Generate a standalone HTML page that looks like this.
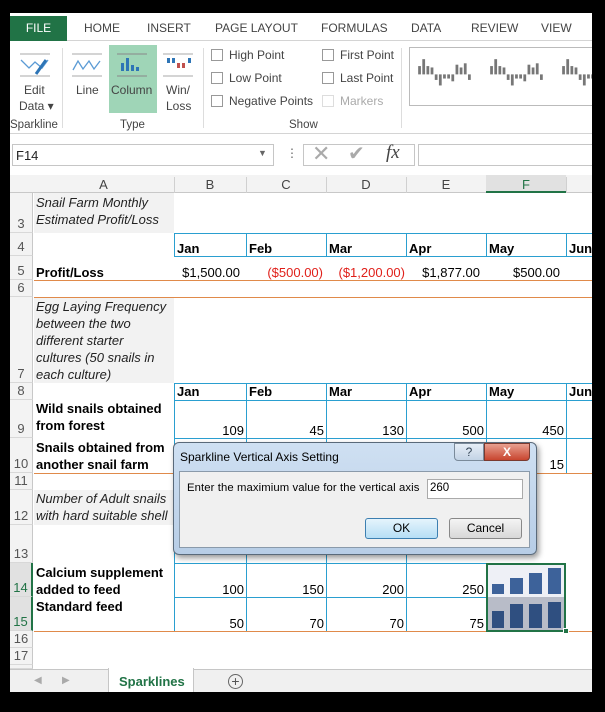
<!DOCTYPE html>
<html><head><meta charset="utf-8"><style>
*{margin:0;padding:0;box-sizing:border-box}
body{width:605px;height:712px;background:#000;position:relative;overflow:hidden;font-family:"Liberation Sans",sans-serif;}
.a{position:absolute}
.t{font-size:12px;color:#444;position:absolute;white-space:nowrap}
.cb{position:absolute;width:12px;height:12px;border:1px solid #999;background:#fff}
.rh{position:absolute;left:10px;width:23px;background:#f3f3f3;color:#555;font-size:13px;text-align:center;border-bottom:1px solid #d8d8d8;border-right:1px solid #c8c8c8;display:flex;align-items:flex-end;justify-content:center;padding-bottom:1px}
.c{position:absolute;font-size:13px;color:#000;white-space:nowrap;line-height:17px}
.b{font-weight:bold}
.i{font-style:italic;color:#222}
.r{text-align:right}
.hl{position:absolute;height:1px}
.vl{position:absolute;width:1px;background:#2a9fd0}
</style></head><body>
<div class="a" style="left:10px;top:13px;width:582px;height:679px;background:#fff"></div>
<div class="a" style="left:10px;top:13px;width:582px;height:28px;background:#fff;border-bottom:1px solid #d4d4d4"></div>
<div class="a" style="left:10px;top:16px;width:57px;height:25px;background:#217346;color:#fff;font-size:12px;text-align:center;line-height:25px">FILE</div>
<div class="t" style="left:84px;top:21px;font-size:12px">HOME</div>
<div class="t" style="left:147px;top:21px">INSERT</div>
<div class="t" style="left:215px;top:21px">PAGE LAYOUT</div>
<div class="t" style="left:321px;top:21px">FORMULAS</div>
<div class="t" style="left:411px;top:21px">DATA</div>
<div class="t" style="left:471px;top:21px">REVIEW</div>
<div class="t" style="left:541px;top:21px">VIEW</div>
<div class="a" style="left:10px;top:42px;width:582px;height:92px;background:#fff;border-bottom:1px solid #d4d4d4"></div>
<svg class="a" style="left:18px;top:50px" width="34" height="30"><line x1="2" y1="4" x2="32" y2="4" stroke="#aaa"/><line x1="2" y1="26" x2="32" y2="26" stroke="#aaa"/><polyline points="3,10 11,18 17,12 24,18 30,10" fill="none" stroke="#5b9bd5" stroke-width="1.3"/><line x1="28" y1="10" x2="18" y2="24" stroke="#2e75b6" stroke-width="3"/></svg>
<div class="t" style="left:24px;top:83px">Edit</div>
<div class="t" style="left:19px;top:99px">Data ▾</div>
<div class="t" style="left:10px;top:119px;font-size:11.5px">Sparkline</div>
<div class="a" style="left:62px;top:48px;width:1px;height:80px;background:#ddd"></div>
<svg class="a" style="left:70px;top:50px" width="34" height="30"><line x1="2" y1="4" x2="32" y2="4" stroke="#aaa"/><line x1="2" y1="26" x2="32" y2="26" stroke="#aaa"/><polyline points="3,20 8,11 13,19 19,11 24,19 30,11" fill="none" stroke="#5b9bd5" stroke-width="1.3"/></svg>
<div class="t" style="left:76px;top:83px">Line</div>
<div class="a" style="left:109px;top:45px;width:48px;height:68px;background:#9fd5b7"></div>
<svg class="a" style="left:115px;top:50px" width="34" height="30"><line x1="2" y1="4" x2="32" y2="4" stroke="#888"/><line x1="2" y1="26" x2="32" y2="26" stroke="#888"/><rect x="6" y="13" width="3" height="8" fill="#2e75b6"/><rect x="11" y="8" width="3" height="13" fill="#2e75b6"/><rect x="16" y="15" width="3" height="6" fill="#2e75b6"/><rect x="21" y="17" width="3" height="4" fill="#2e75b6"/></svg>
<div class="t" style="left:111px;top:83px">Column</div>
<svg class="a" style="left:161px;top:50px" width="34" height="30"><line x1="2" y1="4" x2="32" y2="4" stroke="#aaa"/><line x1="2" y1="26" x2="32" y2="26" stroke="#aaa"/><rect x="6" y="8" width="3" height="5" fill="#2e75b6"/><rect x="11" y="8" width="3" height="5" fill="#2e75b6"/><rect x="16" y="13" width="3" height="5" fill="#c0504d"/><rect x="21" y="13" width="3" height="5" fill="#c0504d"/><rect x="27" y="8" width="3" height="5" fill="#2e75b6"/></svg>
<div class="t" style="left:166px;top:83px">Win/</div>
<div class="t" style="left:166px;top:99px">Loss</div>
<div class="t" style="left:120px;top:119px;font-size:11.5px">Type</div>
<div class="a" style="left:203px;top:48px;width:1px;height:80px;background:#ddd"></div>
<div class="cb" style="left:211px;top:49px"></div><div class="t" style="left:229px;top:48px">High Point</div>
<div class="cb" style="left:211px;top:72px"></div><div class="t" style="left:229px;top:71px">Low Point</div>
<div class="cb" style="left:211px;top:95px"></div><div class="t" style="left:229px;top:94px">Negative Points</div>
<div class="cb" style="left:322px;top:49px"></div><div class="t" style="left:340px;top:48px">First Point</div>
<div class="cb" style="left:322px;top:72px"></div><div class="t" style="left:340px;top:71px">Last Point</div>
<div class="cb" style="left:322px;top:95px;border-color:#ddd"></div><div class="t" style="left:340px;top:94px;color:#aaa">Markers</div>
<div class="t" style="left:289px;top:119px;font-size:11.5px">Show</div>
<div class="a" style="left:401px;top:48px;width:1px;height:80px;background:#ddd"></div>
<div class="a" style="left:409px;top:47px;width:183px;height:59px;border:1px solid #bbb;border-right:none"></div>
<svg class="a" style="left:416px;top:55px" width="176" height="36" viewBox="0 0 126 26">
<g id="sp" fill="#777"><rect x="1" y="8" width="2" height="6"/><rect x="4" y="3" width="2" height="11"/><rect x="7" y="8" width="2" height="6"/><rect x="10" y="9" width="2" height="5"/><rect x="13" y="14" width="2" height="4"/><rect x="16" y="14" width="2" height="8"/><rect x="19" y="14" width="2" height="3"/><rect x="22" y="14" width="2" height="3"/><rect x="25" y="14" width="2" height="5"/><rect x="28" y="7" width="2" height="7"/><rect x="31" y="9" width="2" height="5"/><rect x="34" y="6" width="2" height="8"/><rect x="37" y="14" width="2" height="4"/></g>
<use href="#sp" x="52" style="fill:#555"/><use href="#sp" x="104" style="fill:#333"/>
</svg>
<div class="a" style="left:10px;top:135px;width:582px;height:30px;background:#fff"></div>
<div class="a" style="left:12px;top:144px;width:262px;height:22px;border:1px solid #c6c6c6"></div>
<div class="t" style="left:16px;top:148px;font-size:13px;color:#222">F14</div>
<div class="t" style="left:258px;top:148px;font-size:9px;color:#666">▼</div>
<div class="t" style="left:286px;top:146px;color:#666">⋮</div>
<div class="a" style="left:303px;top:144px;width:112px;height:22px;border:1px solid #c6c6c6"></div>
<div class="t" style="left:312px;top:141px;font-size:22px;color:#aaa">✕</div>
<div class="t" style="left:348px;top:141px;font-size:20px;color:#aaa">✔</div>
<div class="t" style="left:386px;top:142px;font-size:19px;color:#444;font-family:'Liberation Serif',serif;font-style:italic">fx</div>
<div class="a" style="left:418px;top:144px;width:174px;height:22px;border:1px solid #c6c6c6;border-right:none"></div>
<div class="a" style="left:10px;top:175px;width:582px;height:18px;background:#f3f3f3;border-bottom:1px solid #c8c8c8"></div>
<div class="a" style="left:486px;top:175px;width:80px;height:18px;background:#e1e1e1;border-bottom:2px solid #217346"></div>
<div class="c" style="left:33px;top:176px;width:141px;text-align:center;color:#444">A</div>
<div class="c" style="left:174px;top:176px;width:72px;text-align:center;color:#444">B</div>
<div class="c" style="left:246px;top:176px;width:80px;text-align:center;color:#444">C</div>
<div class="c" style="left:326px;top:176px;width:80px;text-align:center;color:#444">D</div>
<div class="c" style="left:406px;top:176px;width:80px;text-align:center;color:#444">E</div>
<div class="c" style="left:486px;top:176px;width:80px;text-align:center;color:#217346">F</div>
<div class="a" style="left:174px;top:177px;width:1px;height:16px;background:#d0d0d0"></div>
<div class="a" style="left:246px;top:177px;width:1px;height:16px;background:#d0d0d0"></div>
<div class="a" style="left:326px;top:177px;width:1px;height:16px;background:#d0d0d0"></div>
<div class="a" style="left:406px;top:177px;width:1px;height:16px;background:#d0d0d0"></div>
<div class="a" style="left:566px;top:177px;width:1px;height:16px;background:#d0d0d0"></div>
<div class="rh" style="top:193px;height:40px">3</div>
<div class="rh" style="top:233px;height:23px">4</div>
<div class="rh" style="top:256px;height:24px">5</div>
<div class="rh" style="top:280px;height:17px">6</div>
<div class="rh" style="top:297px;height:86px">7</div>
<div class="rh" style="top:383px;height:17px">8</div>
<div class="rh" style="top:400px;height:38px">9</div>
<div class="rh" style="top:438px;height:35px">10</div>
<div class="rh" style="top:473px;height:17px">11</div>
<div class="rh" style="top:490px;height:35px">12</div>
<div class="rh" style="top:525px;height:38px">13</div>
<div class="rh" style="top:563px;height:34px;background:#e1e1e1;color:#217346;border-right:2px solid #217346">14</div>
<div class="rh" style="top:597px;height:34px;background:#e1e1e1;color:#217346;border-right:2px solid #217346">15</div>
<div class="rh" style="top:631px;height:17px">16</div>
<div class="rh" style="top:648px;height:17px">17</div>
<div class="rh" style="top:665px;height:4px"></div>
<div class="a" style="left:34px;top:193px;width:140px;height:40px;background:#f2f2f2"></div>
<div class="a" style="left:34px;top:297px;width:140px;height:86px;background:#f2f2f2"></div>
<div class="a" style="left:34px;top:490px;width:140px;height:35px;background:#f2f2f2"></div>
<div class="hl" style="left:174px;top:233px;width:418px;background:#2a9fd0"></div>
<div class="hl" style="left:174px;top:256px;width:418px;background:#2a9fd0"></div>
<div class="hl" style="left:174px;top:383px;width:418px;background:#2a9fd0"></div>
<div class="hl" style="left:174px;top:400px;width:418px;background:#2a9fd0"></div>
<div class="hl" style="left:174px;top:438px;width:418px;background:#2a9fd0"></div>
<div class="hl" style="left:174px;top:563px;width:312px;background:#2a9fd0"></div>
<div class="hl" style="left:174px;top:597px;width:312px;background:#2a9fd0"></div>
<div class="vl" style="left:174px;top:233px;height:23px"></div><div class="vl" style="left:246px;top:233px;height:23px"></div><div class="vl" style="left:326px;top:233px;height:23px"></div><div class="vl" style="left:406px;top:233px;height:23px"></div><div class="vl" style="left:486px;top:233px;height:23px"></div><div class="vl" style="left:566px;top:233px;height:23px"></div>
<div class="vl" style="left:174px;top:383px;height:90px"></div><div class="vl" style="left:246px;top:383px;height:90px"></div><div class="vl" style="left:326px;top:383px;height:90px"></div><div class="vl" style="left:406px;top:383px;height:90px"></div><div class="vl" style="left:486px;top:383px;height:90px"></div><div class="vl" style="left:566px;top:383px;height:90px"></div>
<div class="vl" style="left:174px;top:525px;height:106px"></div><div class="vl" style="left:246px;top:525px;height:106px"></div><div class="vl" style="left:326px;top:525px;height:106px"></div><div class="vl" style="left:406px;top:525px;height:106px"></div>
<div class="hl" style="left:34px;top:280px;width:558px;background:#e08a4a"></div>
<div class="hl" style="left:34px;top:297px;width:558px;background:#e08a4a"></div>
<div class="hl" style="left:34px;top:473px;width:558px;background:#e08a4a"></div>
<div class="hl" style="left:34px;top:631px;width:558px;background:#e08a4a"></div>
<div class="c i" style="left:36px;top:194px">Snail Farm Monthly<br>Estimated Profit/Loss</div>
<div class="c b" style="left:177px;top:240px">Jan</div><div class="c b" style="left:249px;top:240px">Feb</div><div class="c b" style="left:329px;top:240px">Mar</div><div class="c b" style="left:409px;top:240px">Apr</div><div class="c b" style="left:489px;top:240px">May</div><div class="c b" style="left:569px;top:240px">Jun</div>
<div class="c b" style="left:36px;top:264px">Profit/Loss</div>
<div class="c r" style="left:174px;top:264px;width:66px">$1,500.00</div>
<div class="c r" style="left:246px;top:264px;width:77px;color:#e0201a">($500.00)</div>
<div class="c r" style="left:326px;top:264px;width:79px;color:#e0201a">($1,200.00)</div>
<div class="c r" style="left:406px;top:264px;width:74px">$1,877.00</div>
<div class="c r" style="left:486px;top:264px;width:74px">$500.00</div>
<div class="c i" style="left:36px;top:298px">Egg Laying Frequency<br>between the two<br>different starter<br>cultures (50 snails in<br>each culture)</div>
<div class="c b" style="left:177px;top:383px">Jan</div><div class="c b" style="left:249px;top:383px">Feb</div><div class="c b" style="left:329px;top:383px">Mar</div><div class="c b" style="left:409px;top:383px">Apr</div><div class="c b" style="left:489px;top:383px">May</div><div class="c b" style="left:569px;top:383px">Jun</div>
<div class="c b" style="left:36px;top:400px">Wild snails obtained<br>from forest</div>
<div class="c r" style="left:174px;top:422px;width:70px">109</div><div class="c r" style="left:246px;top:422px;width:78px">45</div><div class="c r" style="left:326px;top:422px;width:78px">130</div><div class="c r" style="left:406px;top:422px;width:78px">500</div><div class="c r" style="left:486px;top:422px;width:78px">450</div>
<div class="c b" style="left:36px;top:439px">Snails obtained from<br>another snail farm</div>
<div class="c r" style="left:486px;top:456px;width:78px">15</div>
<div class="c i" style="left:36px;top:490px">Number of Adult snails<br>with hard suitable shell</div>
<div class="c b" style="left:36px;top:564px">Calcium supplement<br>added to feed</div>
<div class="c b" style="left:36px;top:598px">Standard feed</div>
<div class="c r" style="left:174px;top:581px;width:70px">100</div><div class="c r" style="left:246px;top:581px;width:78px">150</div><div class="c r" style="left:326px;top:581px;width:78px">200</div><div class="c r" style="left:406px;top:581px;width:78px">250</div>
<div class="c r" style="left:174px;top:615px;width:70px">50</div><div class="c r" style="left:246px;top:615px;width:78px">70</div><div class="c r" style="left:326px;top:615px;width:78px">70</div><div class="c r" style="left:406px;top:615px;width:78px">75</div>
<div class="a" style="left:486px;top:563px;width:80px;height:69px;border:2px solid #217346;background:#eef0f6"></div>
<div class="a" style="left:488px;top:597px;width:76px;height:33px;background:#b8bcc8"></div>
<div class="a" style="left:492px;top:584px;width:12px;height:10px;background:#3d629a"></div>
<div class="a" style="left:510px;top:578px;width:13px;height:16px;background:#3d629a"></div>
<div class="a" style="left:529px;top:573px;width:13px;height:21px;background:#3d629a"></div>
<div class="a" style="left:548px;top:568px;width:13px;height:26px;background:#3d629a"></div>
<div class="a" style="left:492px;top:611px;width:12px;height:17px;background:#2f4f80"></div>
<div class="a" style="left:510px;top:604px;width:13px;height:24px;background:#2f4f80"></div>
<div class="a" style="left:529px;top:604px;width:13px;height:24px;background:#2f4f80"></div>
<div class="a" style="left:548px;top:602px;width:13px;height:26px;background:#2f4f80"></div>
<div class="a" style="left:563px;top:628px;width:6px;height:6px;background:#217346;border:1px solid #fff"></div>
<div class="a" style="left:173px;top:442px;width:364px;height:113px;border:1px solid #5a6a7a;border-radius:6px;background:linear-gradient(#cfe0f2,#b7cde6);box-shadow:2px 3px 6px rgba(0,0,0,.4)"></div>
<div class="t" style="left:180px;top:450px;color:#000;font-size:12px">Sparkline Vertical Axis Setting</div>
<div class="a" style="left:454px;top:443px;width:30px;height:18px;border:1px solid #7a8a9a;border-radius:0 0 0 4px;background:linear-gradient(#e6eef7,#c3d3e5);text-align:center;font-size:12px;color:#345;line-height:16px">?</div>
<div class="a" style="left:484px;top:443px;width:46px;height:18px;border:1px solid #7a3a30;border-radius:0 0 4px 0;background:linear-gradient(#e8a090,#c8452f);text-align:center;font-size:12px;color:#fff;font-weight:bold;line-height:16px">X</div>
<div class="a" style="left:179px;top:471px;width:351px;height:77px;background:#f0f0f0;border:1px solid #8a9aaa"></div>
<div class="t" style="left:187px;top:482px;color:#000;font-size:11.3px;letter-spacing:0.1px">Enter the maximium value for the vertical axis</div>
<div class="a" style="left:427px;top:479px;width:96px;height:20px;background:#fff;border:1px solid #aaa"></div>
<div class="t" style="left:430px;top:482px;color:#000;font-size:11.5px">260</div>
<div class="a" style="left:365px;top:518px;width:73px;height:21px;border:1px solid #3c7fb1;border-radius:3px;background:linear-gradient(#e5f4fc,#b6def5);text-align:center;font-size:12px;line-height:19px">OK</div>
<div class="a" style="left:449px;top:518px;width:73px;height:21px;border:1px solid #888;border-radius:3px;background:linear-gradient(#f4f4f4,#d8d8d8);text-align:center;font-size:12px;line-height:19px">Cancel</div>
<div class="a" style="left:10px;top:669px;width:582px;height:23px;background:#f0f0f0;border-top:1px solid #c6c6c6"></div>
<div class="t" style="left:34px;top:675px;color:#aaa;font-size:10px">◀</div>
<div class="t" style="left:62px;top:675px;color:#aaa;font-size:10px">▶</div>
<div class="a" style="left:108px;top:668px;width:86px;height:24px;background:#fff;border-left:1px solid #c6c6c6;border-right:1px solid #c6c6c6"></div>
<div class="t" style="left:119px;top:674px;color:#217346;font-weight:bold;font-size:13px">Sparklines</div>
<div class="a" style="left:228px;top:674px;width:15px;height:15px;border:1px solid #666;border-radius:50%;text-align:center;line-height:12px;font-size:14px;color:#555">+</div>
</body></html>
